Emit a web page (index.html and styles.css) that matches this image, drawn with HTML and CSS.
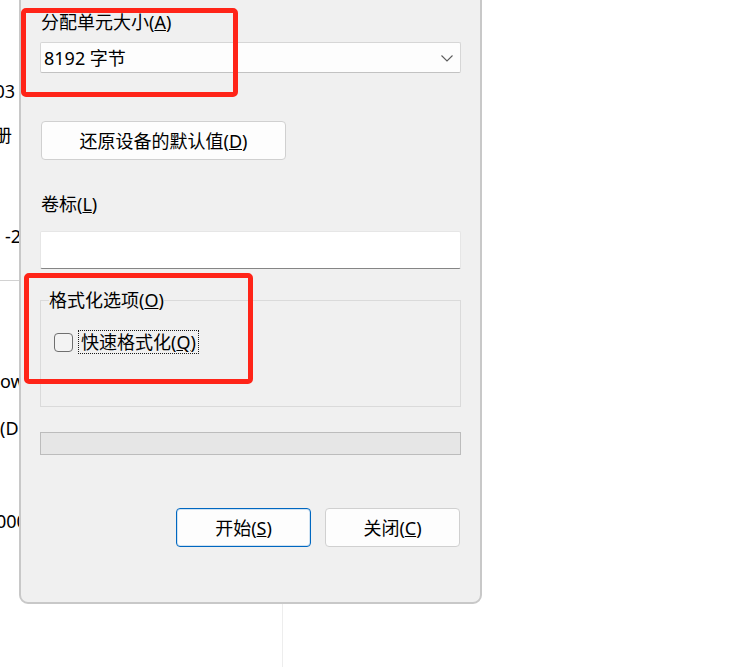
FILE: index.html
```html
<!DOCTYPE html>
<html lang="zh-CN">
<head>
<meta charset="utf-8">
<title>格式化</title>
<link rel="stylesheet" href="styles.css">
</head>
<body>
<div class="stage">
  <div class="backdrop">
    <span class="frag frag-03">2003</span>
    <span class="frag frag-ce">注册</span>
    <span class="frag frag-m2">-2023</span>
    <div class="frag-rule"></div>
    <span class="frag frag-ow">ows</span>
    <span class="frag frag-d">(D:)</span>
    <span class="frag frag-00">000 (</span>
    <div class="frag-vline"></div>
  </div>

  <div class="dialog">
    <div class="label">分配单元大小(<u>A</u>)</div>
    <div class="combo">
      <span class="combo-text">8192 字节</span>
      <svg class="chevron" width="12" height="7" viewBox="0 0 12 7"><polyline points="0.5,0.5 6,6 11.5,0.5" fill="none" stroke="#5c5c5c" stroke-width="1.1"/></svg>
    </div>
    <button class="btn btn-restore">还原设备的默认值(<u>D</u>)</button>
    <div class="label label-vol">卷标(<u>L</u>)</div>
    <div class="textbox"></div>
    <fieldset class="group">
      <legend class="group-title">格式化选项(<u>O</u>)</legend>
      <label class="check">
        <span class="check-box"></span>
        <span class="check-text">快速格式化(<u>Q</u>)</span>
      </label>
    </fieldset>
    <div class="progress"></div>
    <div class="actions">
      <button class="btn btn-primary">开始(<u>S</u>)</button>
      <button class="btn">关闭(<u>C</u>)</button>
    </div>
  </div>

  <div class="mark mark-top"></div>
  <div class="mark mark-options"></div>
</div>
</body>
</html>
```

FILE: styles.css
```css
* { box-sizing: border-box; }

html, body {
  margin: 0;
  padding: 0;
  background: #ffffff;
}

body {
  font-family: "Noto Sans", "Noto Sans CJK SC", sans-serif;
  font-size: 18px;
  color: #000;
}

.stage {
  position: relative;
  width: 754px;
  height: 667px;
  overflow: hidden;
  background: #ffffff;
}

/* window underneath the dialog */
.backdrop {
  position: absolute;
  inset: 0;
}

.frag {
  position: absolute;
  line-height: 24px;
  white-space: nowrap;
}
.frag-03 { right: 739px; top: 79px; }
.frag-ce { right: 742px; top: 123px; }
.frag-m2 { left: 5px; top: 224px; }
.frag-ow { left: 0; top: 369px; }
.frag-d { left: 0; top: 416px; }
.frag-00 { left: -4px; top: 509px; }

.frag-rule {
  position: absolute;
  left: 0;
  top: 280px;
  width: 30px;
  height: 1px;
  background: #d2d2d2;
}

.frag-vline {
  position: absolute;
  left: 282px;
  top: 600px;
  width: 1px;
  height: 80px;
  background: #ededed;
}

/* dialog window */
.dialog {
  position: absolute;
  left: 19px;
  top: -20px;
  width: 463px;
  height: 624px;
  background: #f0f0f0;
  border: 2px solid #c8c8c8;
  border-radius: 0 0 9px 9px;
  padding: 28px 19px 0 19px;
  display: flex;
  flex-direction: column;
  align-items: stretch;
}

.label {
  height: 24px;
  line-height: 24px;
  padding-left: 1px;
}

.combo {
  margin-top: 8px;
  height: 31px;
  background: #fdfdfd;
  border: 1px solid #d6d6d6;
  border-bottom-color: #c2c2c2;
  border-radius: 2px;
  display: flex;
  align-items: center;
  justify-content: space-between;
  padding: 0 7px 0 3px;
}

.combo-text {
  line-height: 24px;
}

.chevron {
  display: block;
  margin-top: 1px;
}

.btn {
  font: inherit;
  color: #000;
  height: 39px;
  background: #fdfdfd;
  border: 1px solid #d0d0d0;
  border-radius: 4px;
  padding: 0;
  line-height: 24px;
  text-align: center;
}

.btn-restore {
  margin-top: 48px;
  margin-left: 1px;
  width: 245px;
  align-self: flex-start;
}

.label-vol {
  margin-top: 32px;
}

.textbox {
  margin-top: 15px;
  height: 38px;
  background: #ffffff;
  border: 1px solid #e6e6e6;
  border-bottom-color: #858585;
  border-radius: 2px;
}

.group {
  margin: 19px 0 0 0;
  padding: 18px 0 52px 0;
  border: 1px solid #dadada;
  min-width: 0;
}

.group-title {
  padding: 0;
  margin-left: 8px;
  line-height: 24px;
  height: 24px;
}

.check {
  display: flex;
  align-items: center;
  gap: 5px;
  height: 24px;
  margin-left: 13px;
}

.check-box {
  width: 19px;
  height: 19px;
  border: 1px solid #6f6f6f;
  border-radius: 4px;
  background: #f3f3f3;
  flex: none;
}

.check-text {
  line-height: 22px;
  height: 24px;
  padding: 0 2px;
  border: 1px dotted #1a1a1a;
}

.progress {
  margin-top: 25px;
  height: 23px;
  background: #e6e6e6;
  border: 1px solid #bcbcbc;
}

.actions {
  margin-top: 53px;
  padding-right: 1px;
  display: flex;
  justify-content: flex-end;
  gap: 14px;
}

.actions .btn {
  width: 135px;
}

.btn-primary {
  border-color: #0067c0;
  box-shadow: inset 0 0 0 1px rgba(0, 103, 192, 0.18);
}

/* red annotation boxes drawn on top */
.mark {
  position: absolute;
  border: 5px solid #ff2418;
  border-radius: 5px;
}

.mark-top {
  left: 21px;
  top: 8px;
  width: 217px;
  height: 89px;
}

.mark-options {
  left: 24px;
  top: 273px;
  width: 229px;
  height: 111px;
}
```
